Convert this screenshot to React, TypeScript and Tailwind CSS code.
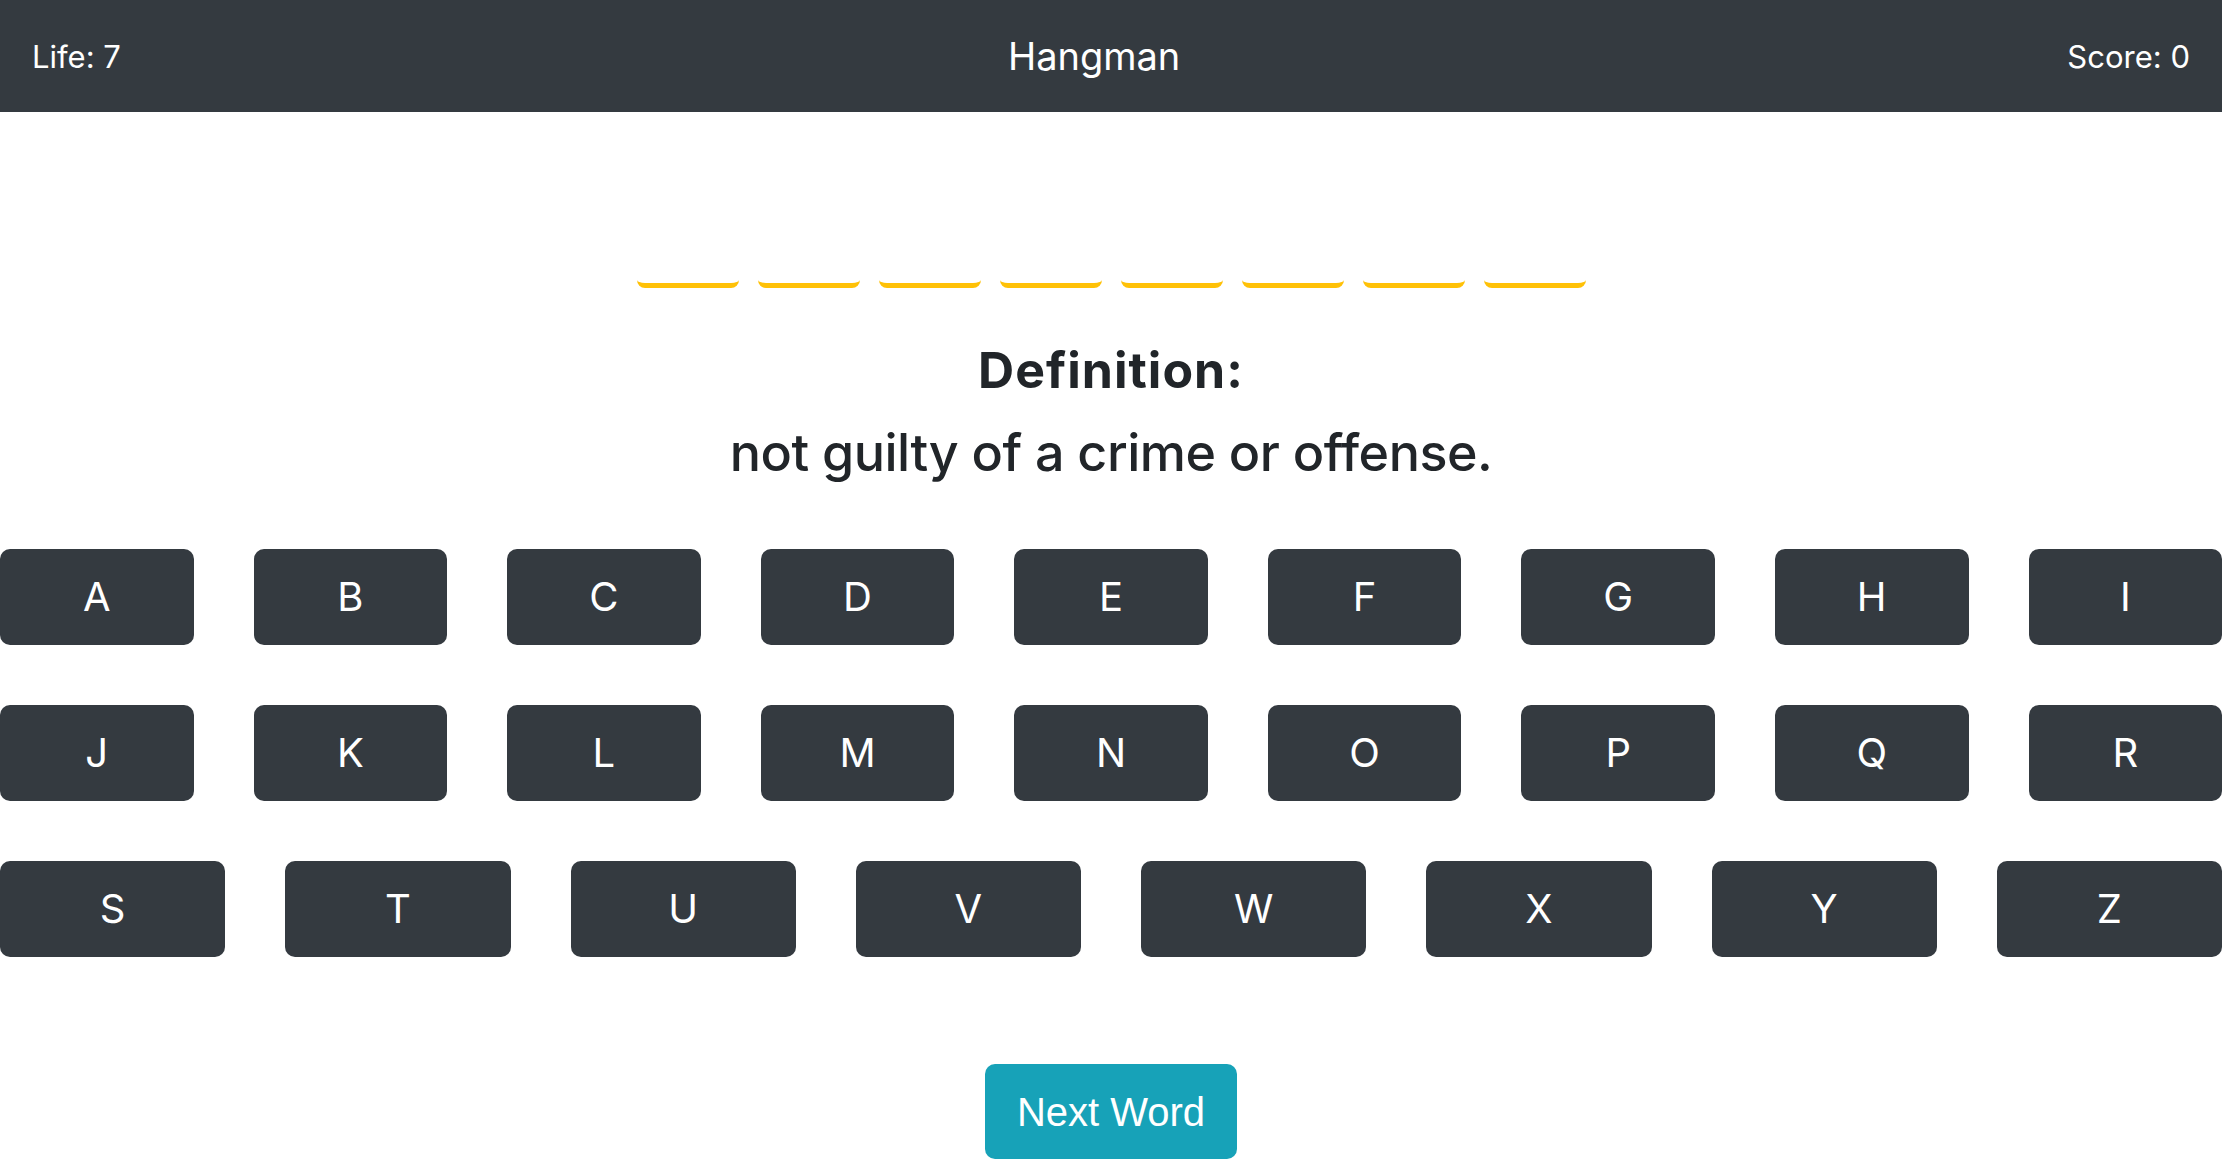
import React from 'react';

const ROWS = [
  ['A', 'B', 'C', 'D', 'E', 'F', 'G', 'H', 'I'],
  ['J', 'K', 'L', 'M', 'N', 'O', 'P', 'Q', 'R'],
  ['S', 'T', 'U', 'V', 'W', 'X', 'Y', 'Z'],
];

const SLOTS = 8;

const App = () => {
  return (
    <div className="w-[2222px] min-h-screen bg-white text-[#212529] font-['Inter',sans-serif]">
      {/* Navbar */}
      <nav className="h-[112px] bg-[#343a40] px-8 flex justify-between items-center text-white">
        <span className="text-[31px] leading-none">Life: 7</span>
        <span className="text-[38px] leading-none">Hangman</span>
        <span className="text-[31px] leading-none">Score: 0</span>
      </nav>

      {/* Word slots */}
      <div className="mt-[128px] flex justify-center gap-[19px]">
        {Array.from({ length: SLOTS }).map((_, i) => (
          <div key={i} className="w-[102px] h-[48px] border-b-[5px] border-[#ffc107] rounded-lg" />
        ))}
      </div>

      {/* Definition */}
      <div className="mt-[52px] text-center">
        <div className="text-[50px] leading-[60px] font-bold tracking-[1px]">Definition:</div>
        <div className="mt-[22px] text-[52px] leading-[62px] font-medium tracking-[-0.5px]">
          not guilty of a crime or offense.
        </div>
      </div>

      {/* Keyboard */}
      <div className="mt-[65px] flex flex-col gap-[60px]">
        {ROWS.map((row, r) => (
          <div key={r} className="flex gap-[60px]">
            {row.map((letter) => (
              <button
                key={letter}
                className="flex-1 h-[96px] rounded-[10px] bg-[#343a40] text-white text-[40px] leading-none"
              >
                {letter}
              </button>
            ))}
          </div>
        ))}
      </div>

      {/* Next word */}
      <div className="mt-[107px] flex justify-center">
        <button className="h-[95px] px-8 rounded-[10px] bg-[#17a2b8] text-white text-[40px] leading-none font-['Liberation_Sans',Arial,sans-serif]">
          Next Word
        </button>
      </div>
    </div>
  );
};

export default App;
